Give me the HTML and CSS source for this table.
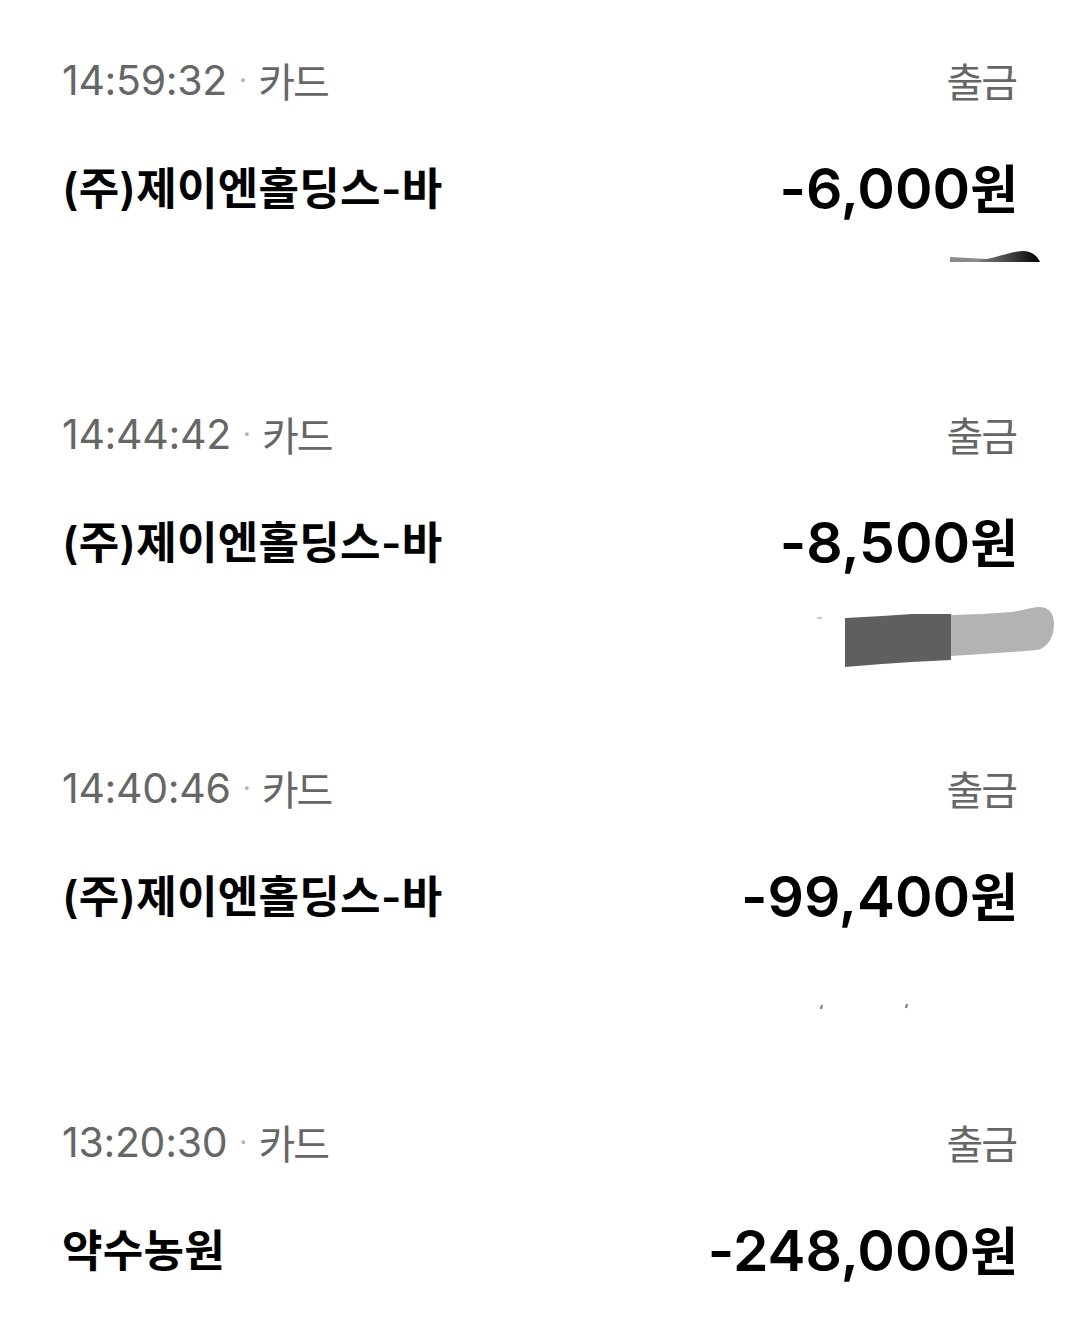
FILE: index.html
```html
<!DOCTYPE html>
<html lang="ko">
<head>
<meta charset="utf-8">
<link rel="stylesheet" href="styles.css">
</head>
<body>
<main class="list">
  <section class="item">
    <div class="meta">
      <span class="when"><span class="time">14:59:32</span><span class="dot">·</span><span class="kr">카드</span></span>
      <span class="kind kr">출금</span>
    </div>
    <div class="main">
      <span class="name">(주)제이엔홀딩스-바</span>
      <span class="amount">-6,000<span class="won">원</span></span>
    </div>
    <div class="balance">
      <svg class="mask" width="956" height="102" viewBox="0 0 956 102">
        <defs>
          <linearGradient id="g1" x1="0" x2="1" y1="0" y2="0">
            <stop offset="0" stop-color="#777"/>
            <stop offset="0.5" stop-color="#444"/>
            <stop offset="1" stop-color="#000"/>
          </linearGradient>
        </defs>
        <path d="M888 35 L925 37 L940 38 L930 40 L888 40 Z" fill="#8a8a8a"/>
        <path d="M918 38 C935 36 948 29 962 29 C970 29 976 35 978 40 L918 40 Z" fill="url(#g1)"/>
      </svg>
    </div>
  </section>

  <section class="item">
    <div class="meta">
      <span class="when"><span class="time">14:44:42</span><span class="dot">·</span><span class="kr">카드</span></span>
      <span class="kind kr">출금</span>
    </div>
    <div class="main">
      <span class="name">(주)제이엔홀딩스-바</span>
      <span class="amount">-8,500<span class="won">원</span></span>
    </div>
    <div class="balance">
      <svg class="mask" width="956" height="102" viewBox="0 0 956 102">
        <path d="M755 42 L760 42" stroke="#999" stroke-width="1"/>
        <path d="M783 42 L820 40 L850 38 L889 38 L889 84 L850 86 L820 88 L783 91 Z" fill="#5f5f5f"/>
        <path d="M889 39 L920 38 L950 36 L970 32 C985 28 992 36 992 48 C992 62 985 72 975 74 L950 76 L920 78 L889 80 Z" fill="#b3b3b3"/>
      </svg>
    </div>
  </section>

  <section class="item">
    <div class="meta">
      <span class="when"><span class="time">14:40:46</span><span class="dot">·</span><span class="kr">카드</span></span>
      <span class="kind kr">출금</span>
    </div>
    <div class="main">
      <span class="name">(주)제이엔홀딩스-바</span>
      <span class="amount">-99,400<span class="won">원</span></span>
    </div>
    <div class="balance">
      <svg class="mask" width="956" height="102" viewBox="0 0 956 102">
        <path d="M759 79 L760 75" stroke="#777" stroke-width="2"/>
        <path d="M844 78 L845 74" stroke="#777" stroke-width="2"/>
      </svg>
    </div>
  </section>

  <section class="item last">
    <div class="meta">
      <span class="when"><span class="time">13:20:30</span><span class="dot">·</span><span class="kr">카드</span></span>
      <span class="kind kr">출금</span>
    </div>
    <div class="main">
      <span class="name">약수농원</span>
      <span class="amount">-248,000<span class="won">원</span></span>
    </div>
  </section>
</main>
</body>
</html>
```

FILE: styles.css
```css
html, body {
  margin: 0;
  padding: 0;
  background: #ffffff;
}

body {
  width: 1080px;
  height: 1318px;
  overflow: hidden;
  font-family: "Inter", "Noto Sans CJK KR", sans-serif;
  color: #000;
}

.list {
  padding: 56px 62px 0 62px;
  display: flex;
  flex-direction: column;
}

.item {
  display: flex;
  flex-direction: column;
  height: 354px;
}

.item.last {
  height: auto;
}

.meta {
  display: flex;
  justify-content: space-between;
  align-items: center;
  height: 48px;
  font-size: 41px;
  color: #666666;
  line-height: 48px;
}

.when {
  display: flex;
  align-items: center;
}

.time {
  letter-spacing: -0.3px;
}

.dot {
  color: #b5b5b5;
  font-size: 28px;
  margin: 0 11px 0 12px;
}

.kr {
  font-family: "Noto Sans CJK KR", sans-serif;
  font-size: 40px;
  letter-spacing: -2px;
}

.kind {
  margin-right: 2px;
}

.main {
  display: flex;
  justify-content: space-between;
  align-items: center;
  height: 72px;
  margin-top: 46px;
}

.name {
  font-family: "Inter", "Noto Sans CJK KR", sans-serif;
  font-weight: 600;
  font-size: 44px;
  letter-spacing: 0.3px;
}

.amount {
  font-weight: 600;
  font-size: 57px;
  letter-spacing: 0;
}

.won {
  font-family: "Noto Sans CJK KR", sans-serif;
  font-weight: 700;
  font-size: 52px;
}

.balance {
  height: 104px;
}

.mask {
  display: block;
  overflow: visible;
}
```
